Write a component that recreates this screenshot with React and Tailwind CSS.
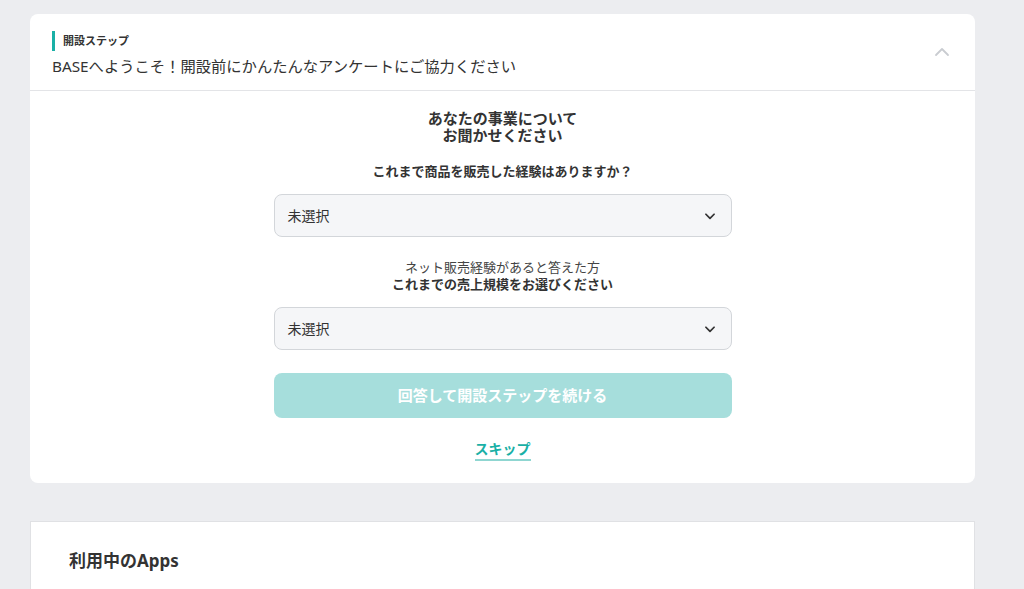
import React from "react";

const ChevronDown = ({ className }) => (
  <svg width="14" height="14" viewBox="0 0 24 24" fill="none" className={className}>
    <path d="M5 9l7 7 7-7" stroke="currentColor" strokeWidth="3" strokeLinecap="round" strokeLinejoin="round" />
  </svg>
);

const ChevronUp = ({ className }) => (
  <svg width="18" height="18" viewBox="0 0 24 24" fill="none" className={className}>
    <path d="M4 16l8-8 8 8" stroke="currentColor" strokeWidth="2.4" strokeLinecap="round" strokeLinejoin="round" />
  </svg>
);

const SelectBox = () => (
  <div className="w-[458px] h-[43px] flex items-center justify-between pl-[13px] pr-[14px] bg-[#f5f6f8] border border-[#d3d6da] rounded-[8px]">
    <span className="text-[14px] text-[#333]">未選択</span>
    <ChevronDown className="text-[#333]" />
  </div>
);

export default function App() {
  return (
    <div
      className="min-h-[589px] bg-[#ecedf0] pt-[14px] pl-[30px] pr-[49px] overflow-hidden"
      style={{ fontFamily: '"Noto Sans", "Noto Sans CJK JP", sans-serif' }}
    >
      <div className="bg-white rounded-[8px]">
        <div className="flex justify-between items-start pl-[22px] pr-[22px] pt-[17px] pb-[13px] border-b border-[#e3e4e7]">
          <div>
            <div className="border-l-[3px] border-[#1ab0a6] pl-[8px] h-[20px] flex items-center">
              <span className="text-[11px] font-bold text-[#333]">開設ステップ</span>
            </div>
            <div className="mt-[4px] text-[15.3px] leading-[22px] text-[#333]">
              BASEへようこそ！開設前にかんたんなアンケートにご協力ください
            </div>
          </div>
          <ChevronUp className="text-[#c9ccd1] mt-[12px] mr-[2px]" />
        </div>

        <div className="flex flex-col items-center pt-[19px] pb-[22px]">
          <h2 className="text-[15px] leading-[17px] font-bold text-[#333] text-center">
            あなたの事業について
            <br />
            お聞かせください
          </h2>
          <p className="mt-[18px] text-[13px] leading-[18px] font-bold text-[#333]">
            これまで商品を販売した経験はありますか？
          </p>
          <div className="mt-[14px]">
            <SelectBox />
          </div>
          <p className="mt-[22px] text-[13px] leading-[17px] text-[#444] text-center">
            ネット販売経験があると答えた方
            <br />
            <span className="font-bold text-[#333]">これまでの売上規模をお選びください</span>
          </p>
          <div className="mt-[14px]">
            <SelectBox />
          </div>
          <button className="mt-[23px] w-[458px] h-[45px] rounded-[8px] bg-[#a6dedc] text-white text-[15px] font-bold">
            回答して開設ステップを続ける
          </button>
          <a className="mt-[22px] text-[14px] leading-[18px] font-bold text-[#1ab0a6] border-b-2 border-[#8fd6d1] pb-[1px]">
            スキップ
          </a>
        </div>
      </div>

      <div className="mt-[38px] bg-white border border-[#e0e1e4] pl-[38px] pt-[26px] pb-[20px]">
        <h3 className="text-[17px] font-bold text-[#333]">利用中のApps</h3>
      </div>
    </div>
  );
}
